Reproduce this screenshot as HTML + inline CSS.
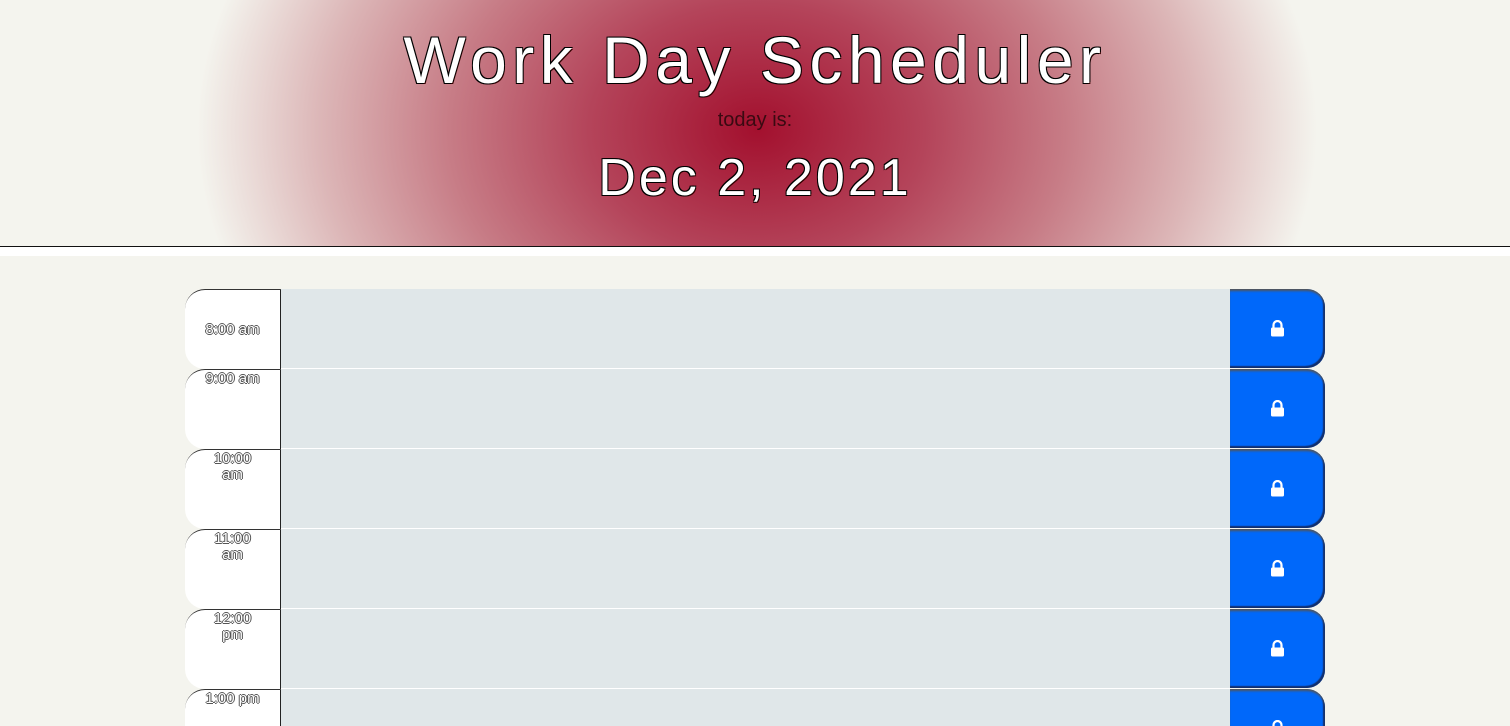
<!DOCTYPE html>
<html style="overflow:hidden;height:726px"><head><meta charset="utf-8"><style>
*{margin:0;padding:0;box-sizing:border-box}
body{width:1510px;height:726px;overflow:hidden;background:#f4f4ee;font-family:"Liberation Sans",sans-serif;position:relative}
.hdr{position:absolute;left:0;top:0;width:1510px;height:246px;
background:radial-gradient(ellipse 560px 420px at 757px 130px,#a3102e 0%,#b4445a 30%,#c77c86 55%,#dcb6b7 78%,#f4f4ee 100%);}
.line{position:absolute;left:0;top:246px;width:1510px;height:1px;background:#111}
.band{position:absolute;left:0;top:247px;width:1510px;height:9px;background:#fff}
h1{position:absolute;top:22px;left:0;width:1510px;text-align:center;font-weight:300;font-size:66px;letter-spacing:5.5px;color:#fff;
text-shadow:-1px -1px 0 #000,1px -1px 0 #000,-1px 1px 0 #000,1px 1px 0 #300}
.today{position:absolute;top:109px;left:0;width:1510px;text-align:center;font-size:20px;color:#3a0a12}
.date{position:absolute;top:148px;left:0;width:1510px;text-align:center;font-size:52px;letter-spacing:3px;color:#fff;
text-shadow:-1px -1px 0 #000,1px -1px 0 #000,-1px 1px 0 #000,1px 1px 0 #300}
.row{position:absolute;left:185px;width:1140px;height:80px}
.hour{position:absolute;left:0;top:0;width:96px;height:80px;background:#fff;border-radius:20px 0 0 20px;border-top:1px solid #333;border-right:1px solid #222;text-align:center;font-size:15px;color:#fff;line-height:16px;
text-shadow:-1px 0 0 #555,1px 0 0 #555,0 -1px 0 #555,0 1px 0 #555}
.ta{position:absolute;left:96px;top:0;width:949px;height:80px;background:#e0e7e9;border-bottom:1px solid #fff}
.btn{position:absolute;left:1045px;top:0;width:95px;height:79px;background:#0068fa;border-radius:0 18px 18px 0;box-shadow:inset 0 3px 2px -1px #555,inset -2px -2px 1px #13306e}
.btn svg{position:absolute;left:40px;top:31px}
</style></head><body>
<div class="hdr"></div>
<h1>Work Day Scheduler</h1>
<div class="today">today is:</div>
<div class="date">Dec 2, 2021</div>
<div class="line"></div><div class="band"></div>

<div class="row" style="top:289px"><div class="hour" style="padding-top:32px">8:00 am</div><div class="ta"></div><div class="btn"><svg width="15" height="17" viewBox="0 0 15 17"><path d="M3.5 8V5a4 4 0 0 1 8 0v3" fill="none" stroke="#fff" stroke-width="2.2"/><rect x="1" y="7.5" width="13" height="9" rx="1.5" fill="#fff"/></svg></div></div>
<div class="row" style="top:369px"><div class="hour" style="padding-top:1px">9:00 am</div><div class="ta"></div><div class="btn"><svg width="15" height="17" viewBox="0 0 15 17"><path d="M3.5 8V5a4 4 0 0 1 8 0v3" fill="none" stroke="#fff" stroke-width="2.2"/><rect x="1" y="7.5" width="13" height="9" rx="1.5" fill="#fff"/></svg></div></div>
<div class="row" style="top:449px"><div class="hour" style="padding:1px 28px 0">10:00 am</div><div class="ta"></div><div class="btn"><svg width="15" height="17" viewBox="0 0 15 17"><path d="M3.5 8V5a4 4 0 0 1 8 0v3" fill="none" stroke="#fff" stroke-width="2.2"/><rect x="1" y="7.5" width="13" height="9" rx="1.5" fill="#fff"/></svg></div></div>
<div class="row" style="top:529px"><div class="hour" style="padding:1px 28px 0">11:00 am</div><div class="ta"></div><div class="btn"><svg width="15" height="17" viewBox="0 0 15 17"><path d="M3.5 8V5a4 4 0 0 1 8 0v3" fill="none" stroke="#fff" stroke-width="2.2"/><rect x="1" y="7.5" width="13" height="9" rx="1.5" fill="#fff"/></svg></div></div>
<div class="row" style="top:609px"><div class="hour" style="padding:1px 28px 0">12:00 pm</div><div class="ta"></div><div class="btn"><svg width="15" height="17" viewBox="0 0 15 17"><path d="M3.5 8V5a4 4 0 0 1 8 0v3" fill="none" stroke="#fff" stroke-width="2.2"/><rect x="1" y="7.5" width="13" height="9" rx="1.5" fill="#fff"/></svg></div></div>
<div class="row" style="top:689px"><div class="hour" style="padding-top:1px">1:00 pm</div><div class="ta"></div><div class="btn"><svg width="15" height="17" viewBox="0 0 15 17"><path d="M3.5 8V5a4 4 0 0 1 8 0v3" fill="none" stroke="#fff" stroke-width="2.2"/><rect x="1" y="7.5" width="13" height="9" rx="1.5" fill="#fff"/></svg></div></div>
</body></html>
